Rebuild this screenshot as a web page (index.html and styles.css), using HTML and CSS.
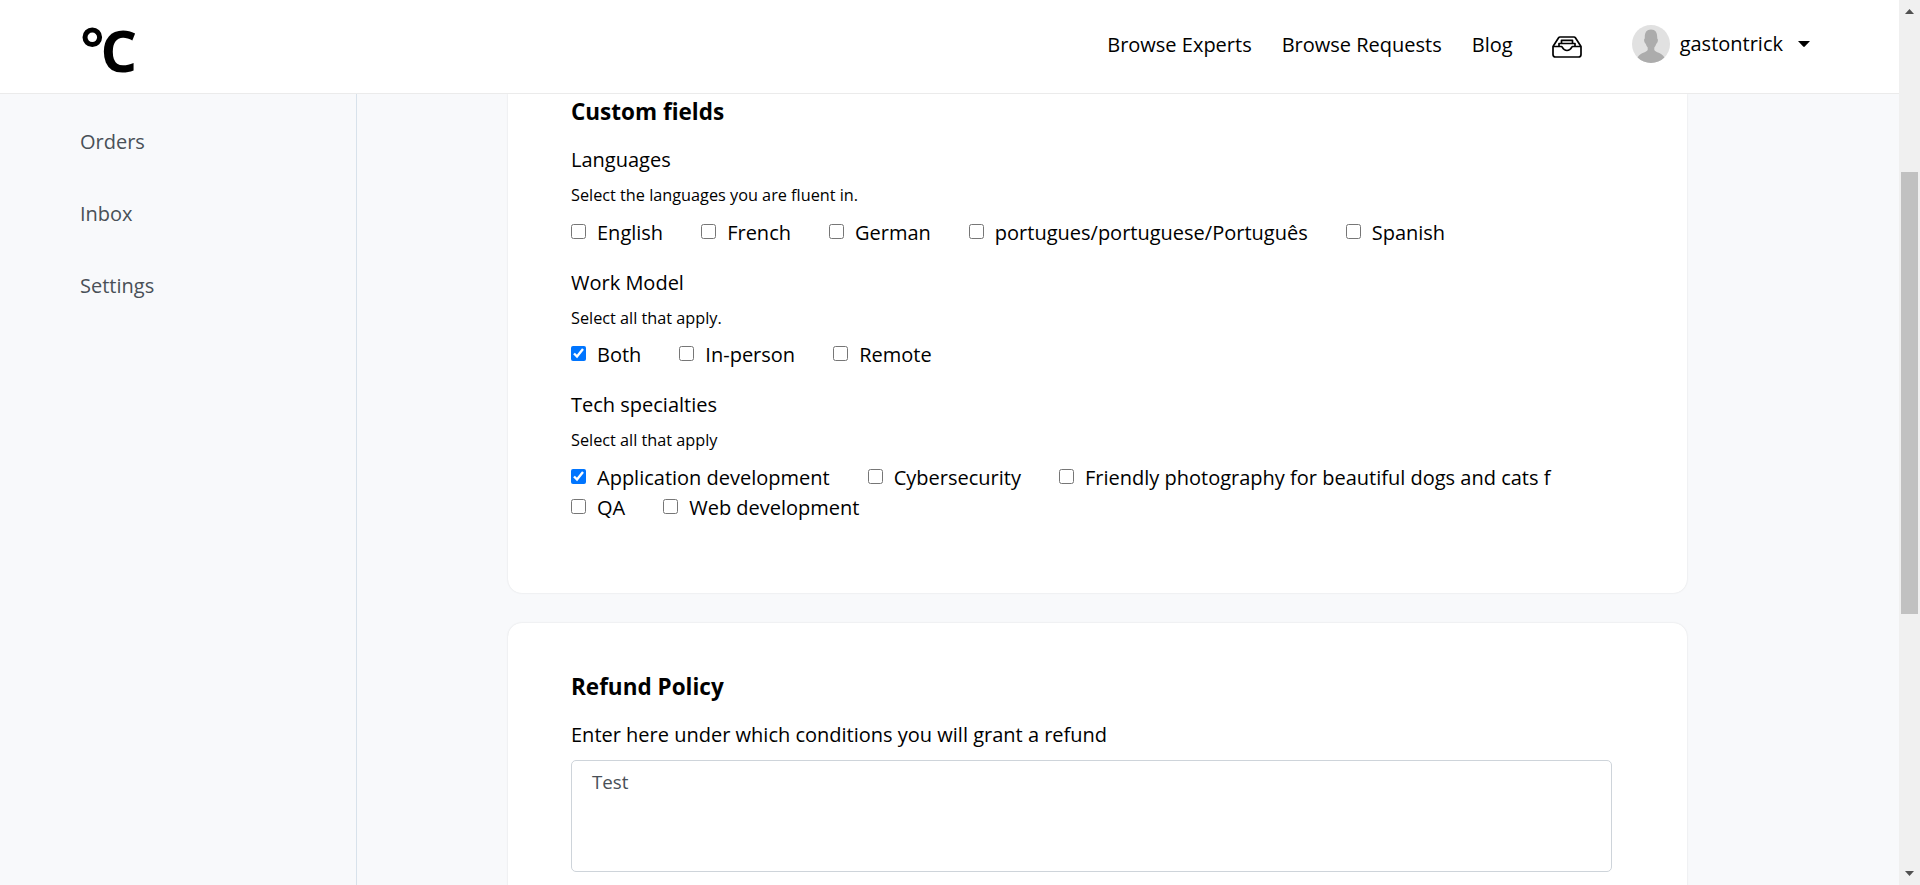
FILE: index.html
```html
<!DOCTYPE html>
<html lang="en">
<head>
<meta charset="utf-8">
<title>Profile settings</title>
<link rel="stylesheet" href="styles.css">
</head>
<body>
<div class="page">
  <div class="site">
    <header class="header">
      <a class="logo">
        <svg width="70" height="90" viewBox="0 -20 70 90">
          <circle cx="12.300" cy="17.300" r="7.300" fill="none" stroke="#000" stroke-width="5"/>
          <text class="logo-text" x="20.600" y="51.500">C</text>
        </svg>
      </a>
      <nav class="nav">
        <a class="nav-link">Browse Experts</a>
        <a class="nav-link">Browse Requests</a>
        <a class="nav-link">Blog</a>
        <svg class="inbox-icon" width="30" height="22" viewBox="0 0 30 22" fill="none" stroke="#000" stroke-width="1.7" stroke-linejoin="round">
          <path d="M1 10.500 6.600 1.800Q7.100 1 8 1H22Q22.900 1 23.400 1.800L29 10.500V18.500Q29 21 26.500 21H3.500Q1 21 1 18.500Z"/>
          <path d="M1 10.500H9.500C10.500 10.500 10.500 14.500 15 14.500S19.500 10.500 20.500 10.500H29"/>
          <path d="M7 10V7.500H23V10M9.500 7.500V4.300H20.500V7.500"/>
        </svg>
        <div class="account">
          <svg class="avatar" width="38" height="38" viewBox="0 0 38 38">
            <circle cx="19" cy="19" r="19" fill="#e1e1e1"/>
            <path fill="#acacac" d="M19 4.500C23.800 4.500 25.500 8 25.200 13.500Q26.300 14 25.700 16.500 25.200 18.500 24.300 18.700 23.600 21 22.300 22.500V25C23.500 27.500 29.500 27.500 32.400 32.400A19 19 0 0 1 5.600 32.400C8.500 27.500 14.500 27.500 15.700 25V22.500Q14.400 21 13.700 18.700 12.800 18.500 12.300 16.500 11.700 14 12.800 13.500C12.500 8 14.200 4.500 19 4.500Z"/>
          </svg>
          <span class="username">gastontrick</span>
          <svg class="caret" width="12" height="6" viewBox="0 0 12 6"><path d="M0 0H12L6.800 5.600Q6 6.300 5.200 5.600Z"/></svg>
        </div>
      </nav>
    </header>
    <div class="body">
      <aside class="sidebar">
        <a class="side-link">Orders</a>
        <a class="side-link">Inbox</a>
        <a class="side-link">Settings</a>
      </aside>
      <main class="main">
        <section class="card card-fields">
          <h2 class="title">Custom fields</h2>
          <div class="group">
            <div class="label">Languages</div>
            <div class="hint">Select the languages you are fluent in.</div>
            <div class="options">
              <label class="option"><input class="check" type="checkbox">English</label>
              <label class="option"><input class="check" type="checkbox">French</label>
              <label class="option"><input class="check" type="checkbox">German</label>
              <label class="option"><input class="check" type="checkbox">portugues/portuguese/Português</label>
              <label class="option"><input class="check" type="checkbox">Spanish</label>
            </div>
          </div>
          <div class="group">
            <div class="label">Work Model</div>
            <div class="hint">Select all that apply.</div>
            <div class="options">
              <label class="option"><input class="check" type="checkbox" checked>Both</label>
              <label class="option"><input class="check" type="checkbox">In-person</label>
              <label class="option"><input class="check" type="checkbox">Remote</label>
            </div>
          </div>
          <div class="group">
            <div class="label">Tech specialties</div>
            <div class="hint">Select all that apply</div>
            <div class="options">
              <label class="option"><input class="check" type="checkbox" checked>Application development</label>
              <label class="option"><input class="check" type="checkbox">Cybersecurity</label>
              <label class="option"><input class="check" type="checkbox">Friendly photography for beautiful dogs and cats f</label>
              <label class="option"><input class="check" type="checkbox">QA</label>
              <label class="option"><input class="check" type="checkbox">Web development</label>
            </div>
          </div>
        </section>
        <section class="card card-refund">
          <h2 class="title">Refund Policy</h2>
          <div class="label">Enter here under which conditions you will grant a refund</div>
          <textarea class="textarea">Test</textarea>
        </section>
      </main>
    </div>
  </div>
  <div class="scrollbar">
    <svg width="9" height="5" viewBox="0 0 9 5"><path fill="#505050" d="M0 5 4.500 0 9 5Z"/></svg>
    <div class="thumb"></div>
    <svg width="9" height="5" viewBox="0 0 9 5"><path fill="#505050" d="M0 0 4.500 5 9 0Z"/></svg>
  </div>
</div>
</body>
</html>
```
FILE: styles.css
```css
* { box-sizing: border-box; }
body {
  margin: 0;
  font: 20px/30px "Open Sans", sans-serif;
  color: #000;
  overflow: hidden;
}
.page { display: flex; height: 885px; overflow: hidden; }
.site { flex: 1; display: flex; flex-direction: column; background: #f8f9fb; }
.header {
  display: flex;
  justify-content: space-between;
  height: 94px;
  flex: none;
  padding: 0 89px 0 80px;
  background: #fff;
  border-bottom: 1px solid #ebebeb;
}
.logo-text { font-size: 57.5px; font-weight: 700; }
.nav { display: flex; align-items: flex-start; }
.nav-link { margin: 30px 30px 0 0; }
.inbox-icon { margin: 36px 50px 0 9px; }
.account { display: flex; align-items: center; padding-top: 25px; }
.username { margin: 0 15px 0 10px; }
.body { flex: 1; display: flex; min-height: 0; }
.sidebar {
  width: 357px;
  border-right: 1px solid #d8e2eb;
  padding: 33px 0 0 80px;
  display: flex;
  flex-direction: column;
  gap: 42px;
  color: #495057;
}
.main { flex: 1; padding-left: 151px; overflow: hidden; }
.card { width: 1179px; background: #fff; box-shadow: 0 0 2px rgba(0, 0, 0, .12); }
.card-fields { height: 499px; padding: 3px 63px 0; border-radius: 0 0 14px 14px; }
.card-refund { height: 320px; margin-top: 30px; padding: 49px 63px 0; border-radius: 14px; }
.title { margin: 0 0 18px; font-size: 22.5px; line-height: 30px; font-weight: 700; }
.group { margin-bottom: 20px; }
.hint { margin: 8px 0 10.6px; font-size: 16.25px; line-height: 24px; }
.options { display: flex; flex-wrap: wrap; column-gap: 38px; }
.option { display: flex; }
.check { width: 15px; height: 15px; margin: 6px 11px 0 0; }
.textarea {
  display: block;
  width: 1041px;
  height: 112px;
  margin-top: 10px;
  padding: 6px 20px;
  border: 1px solid #ced4da;
  border-radius: 5px;
  font: 18.75px/30px "Open Sans", sans-serif;
  color: #495057;
  resize: none;
}
.scrollbar {
  width: 21px;
  background: #f0f0f0;
  display: flex;
  flex-direction: column;
  align-items: center;
  padding: 9px 0 9px;
}
.thumb { width: 17px; height: 442px; margin: 158px 0 auto; background: #c1c1c1; }
```
